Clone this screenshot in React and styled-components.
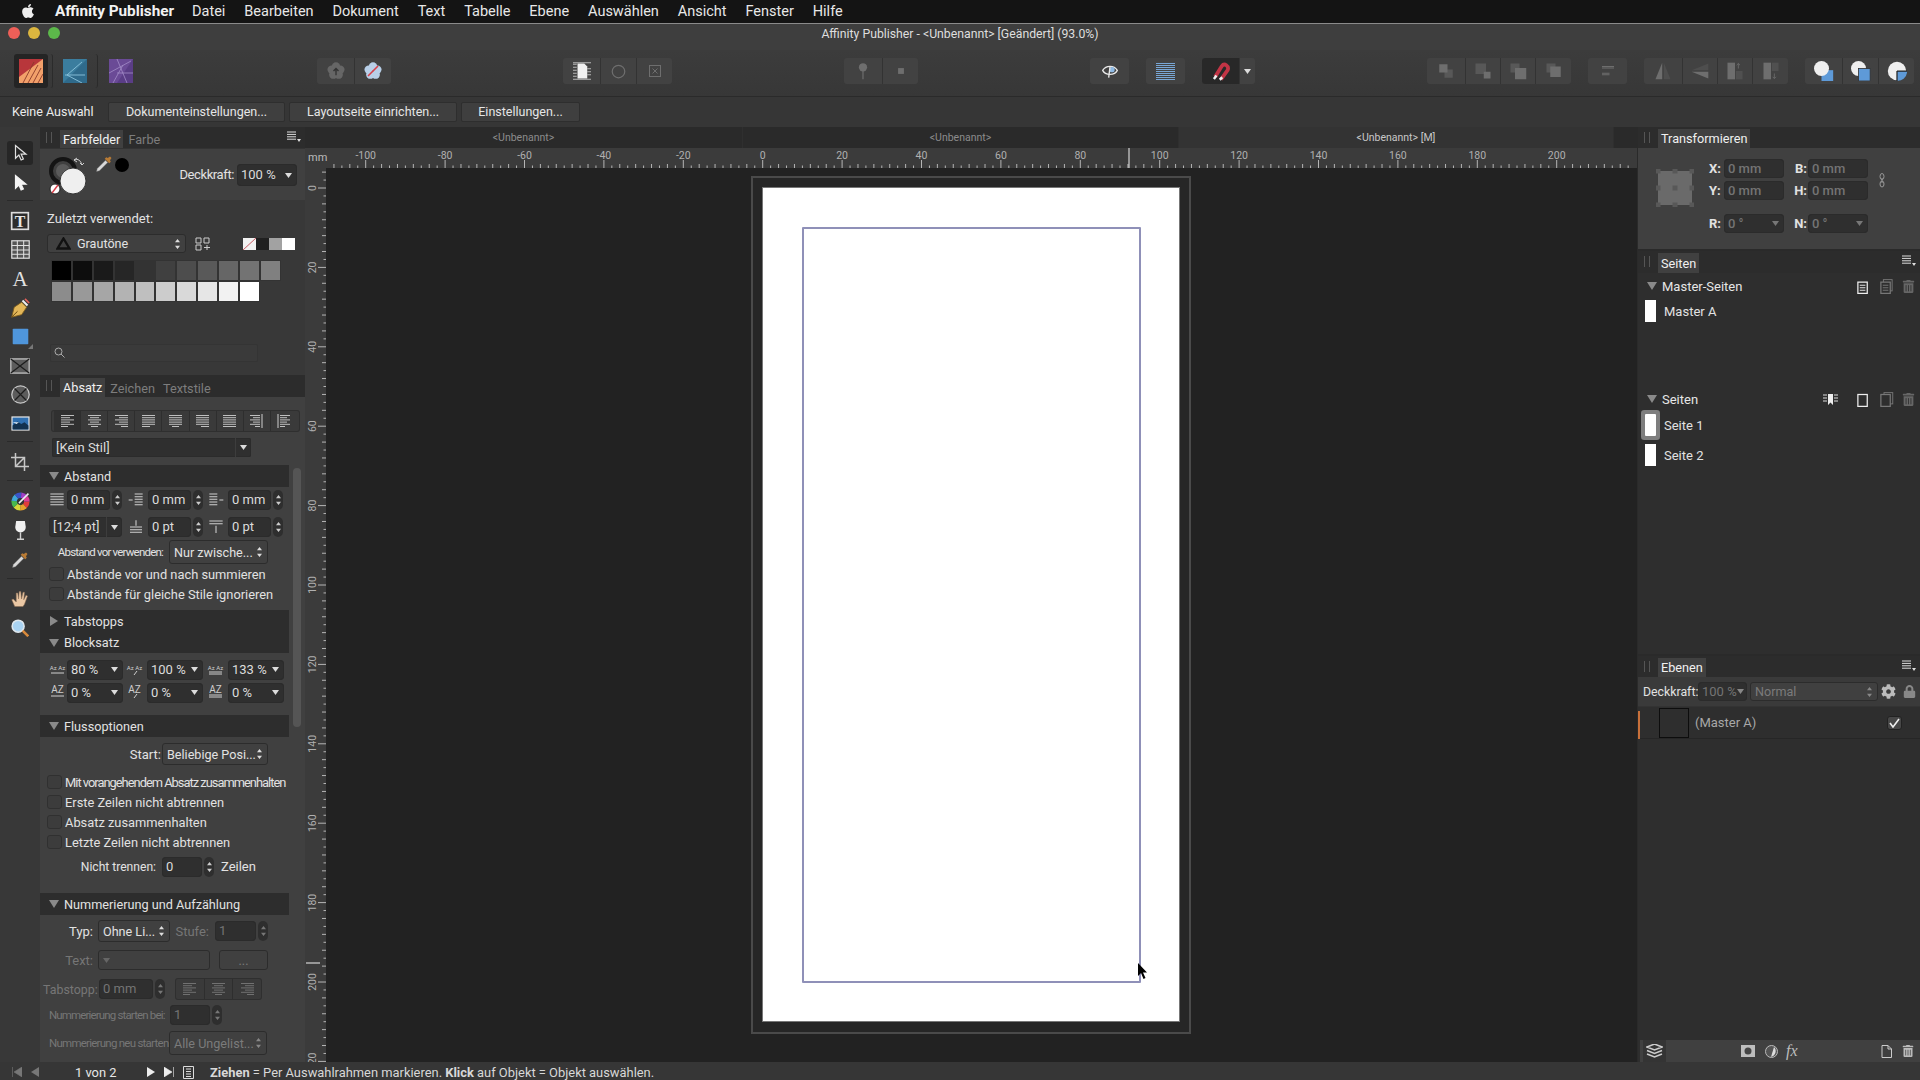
import React from "react";
import styled, { createGlobalStyle } from "styled-components";
import { FaApple, FaCog, FaLock, FaTrashAlt } from "react-icons/fa";

const Global = createGlobalStyle`
  html, body { margin: 0; background: #383838; overflow: hidden; }
  * { box-sizing: border-box; }
  #root { width: 1920px; height: 1080px; font-family: Roboto, "Liberation Sans", sans-serif; }
  svg { display: block; flex: none; }
`;

const Shell = styled.div`
  width: 1920px; height: 1080px; display: flex; flex-direction: column;
  background: #383838; color: #e2e2e2; font-size: 13px; overflow: hidden;
`;

/* top bars */
const MenuBar = styled.div`
  height: 24px; background: #141414; border-bottom: 1px solid #8a8a8a; display: flex; align-items: center;
  padding: 0 0 1px 20px; font-size: 14.5px; color: #e8e8e8; gap: 18.9px;
  b { font-weight: 700; font-size: 15.3px; color: #f2f2f2; margin-right: -1px; }
`;
const TitleBar = styled.div`
  height: 26px; position: relative; display: flex; align-items: center; justify-content: center;
  background: #3e3e3e; font-size: 12.25px; color: #dedede; padding-bottom: 6px;
`;
const Lights = styled.div`
  position: absolute; left: 8px; top: 3px; display: flex; gap: 8px;
`;
const Light = styled.span`
  width: 12px; height: 12px; border-radius: 50%; background: ${(p) => p.$c};
`;
const Toolbar = styled.div`
  height: 47px; display: flex; align-items: flex-start; padding: 8px 0 0 14px;
  background: linear-gradient(#3c3c3c, #373737); border-bottom: 1px solid #2a2a2a;
`;
const Persona = styled.div`
  width: ${(p) => p.$w}px; height: 34px; margin-top: -4px; display: flex; align-items: center; justify-content: center;
  background: ${(p) => (p.$on ? "#242424" : "transparent")}; border-radius: 3px;
  border-right: ${(p) => (p.$line ? "1px solid #2b2b2b" : "none")};
`;
const BtnGroup = styled.div`
  display: flex; height: 26px; margin-left: ${(p) => p.$ml || 0}px; background: #424242; border-radius: 3px; overflow: hidden;
`;
const ToolBtn = styled.div`
  width: ${(p) => p.$w || 36}px; display: flex; align-items: center; justify-content: center;
  background: ${(p) => (p.$dark ? "#282828" : "transparent")};
  & + & { border-left: 1px solid #333; }
`;
const ContextBar = styled.div`
  height: 30px; display: flex; align-items: flex-start; padding: 5px 0 0 12px; gap: 4px; background: #363636;
  span { width: 81px; margin-right: 11px; line-height: 20px; font-size: 12.5px; color: #ececec; white-space: nowrap; }
`;
const ContextBtn = styled.div`
  width: ${(p) => p.$w}px; height: 20px; background: #3f3f3f; border: 1px solid #2e2e2e; border-radius: 2px;
  text-align: center; line-height: 18px; font-size: 12.5px; color: #e6e6e6;
`;

/* main columns */
const Main = styled.div`
  flex: 1; display: flex; min-height: 0;
`;
const ToolColumn = styled.div`
  width: 40px; background: #383838; display: flex; flex-direction: column; align-items: center; padding-top: 14px;
`;
const Tool = styled.div`
  width: 26px; height: ${(p) => p.$h || 29}px; display: flex; align-items: center; justify-content: center; border-radius: 3px;
  background: ${(p) => (p.$on ? "#262626" : "transparent")};
  margin-bottom: ${(p) => p.$mb || 0}px;
  position: relative;
`;
const ToolRule = styled.div`
  width: 26px; height: 1px; background: #2a2a2a; margin: ${(p) => p.$m || "3px 0"};
`;

/* panels */
const LeftPanel = styled.div`
  width: 265px; background: #404040; display: flex; flex-direction: column;
`;
const PanelHead = styled.div`
  height: ${(p) => p.$h || 21}px; background: #2c2c2c; display: flex; align-items: flex-end; position: relative; padding-left: 20px;
  font-size: 12.7px; color: #777; flex: none;
  &::before {
    content: ""; position: absolute; left: 6px; top: 5px; width: 4px; height: 11px;
    border-left: 1px solid #555; border-right: 1px solid #555;
  }
`;
const Tab = styled.div`
  height: ${(p) => p.$h || 18}px; padding: 0 3px; margin-right: ${(p) => p.$mr || 2}px; display: flex; align-items: center;
  background: ${(p) => (p.$on ? "#404040" : "transparent")};
  color: ${(p) => (p.$on ? "#f0f0f0" : "#7d7d7d")};
`;
const HeadMenu = styled.div`
  position: absolute; right: 4px; top: 4px;
`;
const ColorHead = styled.div`
  height: 52px; display: flex; position: relative; background: #404040; padding: 15px 8px 0 0;
  justify-content: flex-end; align-items: flex-start; gap: 8px; border-top: 1px solid #333;
  em { font-style: normal; line-height: 22px; letter-spacing: -0.4px; margin-right: -5px; }
`;
const ColorChips = styled.div`
  position: absolute; left: 8px; top: 0;
`;
const SwatchArea = styled.div`
  height: 175px; background: #383838; padding: 11px 0 0 7px;
`;
const Faint = styled.div`
  line-height: 16px; color: #e2e2e2;
`;
const SwatchTools = styled.div`
  display: flex; align-items: center; margin-top: 7px; height: 19px;
`;
const Swatches = styled.div`
  display: grid; grid-template-columns: repeat(11, 20.9px); grid-auto-rows: 20.9px; margin: 7px 0 0 4px;
`;
const Swatch = styled.div`
  background: ${(p) => p.$c}; border: 1px solid #333;
`;
const MiniSwatch = styled.div`
  width: 13px; height: 12px; background: ${(p) => p.$c};
`;
const Search = styled.div`
  width: 208px; height: 18px; margin: 42px 0 0 3px; background: #3a3a3a; border: 1px solid #343434; border-radius: 2px;
  padding: 2px 0 0 3px;
`;
const AlignBar = styled.div`
  display: flex; width: ${(p) => p.$w}px; height: 20px; margin: ${(p) => p.$m || 0}; padding: 0 ${(p) => p.$inset || 0}px;
  background: #3a3a3a; border-radius: 2px; overflow: hidden;
  box-shadow: 0 0 0 1px #2f2f2f;
`;
const AlignBtn = styled.div`
  flex: 1; display: flex; align-items: center; justify-content: center;
  background: ${(p) => (p.$on ? "#303030" : "transparent")};
  & + & { border-left: 1px solid #2e2e2e; }
`;
const ScrollPart = styled.div`
  flex: 1; display: flex; min-height: 0; margin-top: 8px;
`;
const Sections = styled.div`
  width: 249px; display: flex; flex-direction: column;
`;
const ScrollStrip = styled.div`
  width: 16px; padding: 3px 0 0 4px;
  div { width: 8px; height: 259px; background: #555; border-radius: 4px; }
`;
const SectionHead = styled.div`
  height: ${(p) => p.$h || 22}px; background: #2d2d2d; display: flex; align-items: center; padding-left: 9px; gap: 5px;
  color: #e2e2e2; flex: none; font-size: 12.7px;
`;
const Triangle = styled.span`
  width: 0; height: 0; flex: none; margin-left: ${(p) => (p.$right ? "1px" : 0)};
  ${(p) =>
    p.$right
      ? "border-top: 5px solid transparent; border-bottom: 5px solid transparent; border-left: 8px solid #8a8a8a; margin-right: 1px;"
      : "border-left: 5px solid transparent; border-right: 5px solid transparent; border-top: 8px solid #8a8a8a;"}
`;
const SectionBody = styled.div`
  height: ${(p) => p.$h}px; padding-top: ${(p) => p.$pt || 0}px; flex: none;
`;
const Row = styled.div`
  display: flex; align-items: center; height: ${(p) => p.$h || 20}px; margin-top: ${(p) => p.$mt || 0}px;
  padding-left: ${(p) => p.$pl ?? 9}px; gap: ${(p) => p.$gap || 0}px;
`;
const Slot = styled.div`
  width: ${(p) => p.$w}px; display: flex; justify-content: ${(p) => (p.$end ? "flex-end" : "flex-start")}; padding-right: ${(p) => (p.$end ? 4 : 0)}px;
`;
const Grow = styled.span`
  flex: 1; margin-left: 6px;
`;
const Field = styled.div`
  width: ${(p) => p.$w}px; height: ${(p) => p.$h || 20}px; background: #2f2f2f; border-radius: ${(p) => p.$r ?? 4}px; padding-left: 4px;
  line-height: ${(p) => p.$h || 20}px; font-size: 13px; color: ${(p) => (p.$dim ? "#747474" : "#dcdcdc")};
  box-shadow: inset 0 0 0 1px #2b2b2b; display: flex; align-items: center; justify-content: space-between; padding-right: 5px; flex: none;
  margin-left: ${(p) => p.$ml || 0}px; white-space: nowrap;
`;
const DropCell = styled.div`
  width: 16px; height: 100%; border-left: 1px solid #3d3d3d; margin-right: -5px; display: flex; align-items: center; justify-content: center;
`;
const Stepper = styled.div`
  width: 10px; height: 20px; margin-left: 2px; background: #2e2e2e; border-radius: 5px; display: flex; align-items: center; justify-content: center; flex: none;
`;
const Selector = styled.div`
  width: ${(p) => p.$w}px; height: ${(p) => p.$h || 22}px; background: #404040; border: 1px solid #2c2c2c; border-radius: 3px;
  display: flex; align-items: center; justify-content: ${(p) => (p.$mid ? "center" : "space-between")}; padding: 0 4px; flex: none;
  font-size: 12.6px; color: ${(p) => (p.$dim ? "#7b7b7b" : "#e2e2e2")}; white-space: nowrap;
  margin-left: ${(p) => p.$ml || 0}px;
`;
const Label = styled.div`
  width: ${(p) => p.$w}px; text-align: right; margin: 0 ${(p) => p.$mr ?? 5}px 0 ${(p) => p.$ml || 0}px; white-space: nowrap; flex: none;
  font-size: ${(p) => p.$size || 13}px; letter-spacing: ${(p) => p.$sp || 0}px;
  color: ${(p) => (p.$dim ? "#767676" : "#e2e2e2")};
`;
const CheckRow = styled.div`
  display: flex; align-items: center; height: 20px; padding-left: ${(p) => p.$pl || 9}px; gap: 3px; margin-top: ${(p) => p.$mt || 0}px;
  white-space: nowrap; font-size: 12.85px; letter-spacing: ${(p) => p.$sp || 0}px;
`;
const CheckBox = styled.div`
  width: 15px; height: 14px; background: ${(p) => (p.$lit ? "#474747" : "#3c3c3c")}; border: 1px solid ${(p) => (p.$lit ? "#222" : "#303030")}; border-radius: 3px; flex: none;
  display: flex; align-items: center; justify-content: center;
`;

/* workspace */
const Workspace = styled.div`
  width: 1332px; display: flex; flex-direction: column; background: #222;
`;
const DocTabs = styled.div`
  height: 21px; display: flex; background: #2a2a2a; font-size: 10.5px; color: #8c8c8c; flex: none;
`;
const DocTab = styled.div`
  width: ${(p) => p.$w}px; display: flex; align-items: center; justify-content: center;
  background: ${(p) => (p.$on ? "#333" : "transparent")}; color: ${(p) => (p.$on ? "#c8c8c8" : "#8c8c8c")};
  border-right: 1px solid #2f2f2f;
`;
const RulerRow = styled.div`
  height: 20px; display: flex; background: #3b3b3b; flex: none;
`;
const RulerCorner = styled.div`
  width: 21px; font-size: 11px; color: #bbb; padding: 3px 0 0 3px;
`;
const Board = styled.div`
  flex: 1; display: flex; min-height: 0;
`;
const VRuler = styled.div`
  width: 21px; background: #3b3b3b; overflow: hidden;
`;
const Canvas = styled.div`
  width: 1310px; background: #222; padding: 8px 0 0 425px; overflow: hidden;
`;
const Bleed = styled.div`
  width: 440px; height: 858px; border: 2px solid #4a4a4a; background: #262626; padding: 9px;
`;
const Page = styled.div`
  width: 418px; height: 835px; background: #fff; padding: 40px 0 0 40px; position: relative; box-shadow: 0 0 0 1px #777 inset;
`;
const TextFrame = styled.div`
  width: 339px; height: 756px; border: 2px solid #8f90b8; border-radius: 1px;
`;
const Cursor = styled.svg`
  position: absolute; left: 375px; top: 776px;
`;

/* right side */
const RightPanel = styled.div`
  width: 283px; background: #2e2e2e; display: flex; flex-direction: column; border-left: 1px solid #2a2a2a;
`;
const TransformBody = styled.div`
  height: 101px; background: #404040; padding: 11px 0 0 18px; display: flex; gap: 15px; flex: none;
`;
const AnchorBox = styled.div`
  margin-top: 10px;
`;
const TransformGrid = styled.div`
  display: grid; grid-template-columns: 15px 60px 24px 60px 26px; grid-template-rows: 19px 19px 8px 19px; row-gap: 3px; align-items: center;
  font-weight: 500; font-size: 13px;
`;
const AxisRight = styled.b`
  text-align: right; padding-right: 1px;
`;
const LinkSlot = styled.div`
  padding-left: 11px; margin-top: ${(p) => p.$mt || 0}px;
`;
const Spacer = styled.div`
  grid-column: 1 / -1;
`;
const Divider = styled.div`
  height: 2px; background: #2a2a2a; flex: none;
`;
const PageHead = styled.div`
  display: flex; align-items: center; height: 20px; padding-left: 9px; gap: 5px; margin-top: ${(p) => p.$mt || 0}px; color: #e6e6e6; position: relative;
`;
const HeadIcons = styled.div`
  margin-left: auto; display: flex; align-items: center; padding-right: 5px; gap: 8px;
`;
const PageRow = styled.div`
  display: flex; align-items: center; height: ${(p) => p.$h || 24}px; padding-left: 7px; gap: 8px; margin-top: ${(p) => p.$mt || 0}px; color: #e2e2e2;
`;
const Thumb = styled.div`
  width: 11px; height: 22px; background: #fff;
  ${(p) => p.$sel && "box-shadow: 0 0 0 4px #7e7e7e; border-radius: 1px;"}
`;
const PagesBody = styled.div`
  height: 381px; padding-top: 3px; flex: none;
`;
const LayerTools = styled.div`
  height: 30px; display: flex; align-items: center; padding-left: 5px; background: #3a3a3a; border-bottom: 1px solid #333; flex: none;
`;
const LayerRow = styled.div`
  height: 32px; display: flex; align-items: center; border-bottom: 1px solid #262626; padding-right: 18px; flex: none;
`;
const LayerMark = styled.div`
  width: 2px; height: 28px; margin-top: 4px; background: #c8703a;
`;
const LayerThumb = styled.div`
  width: 30px; height: 30px; margin: 0 6px 0 19px; background: #2e2e2e; border: 1px solid #0d0d0d;
`;
const LayerName = styled.div`
  flex: 1; color: #a8a8a8;
`;
const LayerFill = styled.div`
  flex: 1; background: #2e2e2e;
`;
const BottomBar = styled.div`
  height: 22px; margin-left: 2px; background: #404040; display: flex; align-items: center; flex: none;
`;
const StackBtn = styled.div`
  width: 23px; height: 22px; background: #343434; margin-left: 3px; display: flex; align-items: center; justify-content: center;
`;
const Pad = styled.div`
  margin-left: ${(p) => p.$ml}px; display: flex; align-items: center; color: ${(p) => p.$c || "#bdbdbd"};
  font-family: "Liberation Serif", serif; font-style: italic; font-size: 16px;
`;
const StatusBar = styled.div`
  height: 18px; background: #363636; display: flex; align-items: center; padding: 2px 0 0 12px; font-size: 12.9px; flex: none;
  b { font-weight: 700; }
`;
const PageCount = styled.span`
  width: 72px; margin-left: 36px; color: #e6e6e6;
`;
const Hint = styled.span`
  margin-left: 16px; white-space: pre; color: #d8d8d8;
`;

/* icons */
const V = ({ s = 16, w, h, children, box = "0 0 24 24" }) => (
  <svg width={w || s} height={h || s} viewBox={box}>{children}</svg>
);
const UpDown = ({ c = "#ddd" }) => (
  <svg width="7" height="12" viewBox="0 0 7 12">
    <path d="M3.5 1L6 4.2H1zM3.5 11L1 7.8h5z" fill={c} />
  </svg>
);
const Down = ({ c = "#ddd" }) => (
  <svg width="7" height="5" viewBox="0 0 7 5">
    <path d="M0 0h7L3.5 5z" fill={c} />
  </svg>
);
const MenuLines = () => (
  <svg width="14" height="11" viewBox="0 0 14 11">
    <path d="M0 1h9M0 3.4h9M0 5.8h9M0 8.200h9" stroke="#ddd" />
    <path d="M10 8h4l-2 3z" fill="#ddd" />
  </svg>
);
const alignRows = {
  left: [[0, 13], [0, 9], [0, 13], [0, 9], [0, 13], [0, 7]],
  center: [[0, 13], [2, 11], [0, 13], [2, 11], [0, 13], [3, 10]],
  right: [[0, 13], [4, 13], [0, 13], [4, 13], [0, 13], [6, 13]],
  just: [[0, 13], [0, 13], [0, 13], [0, 13], [0, 13], [0, 8]],
  justC: [[0, 13], [0, 13], [0, 13], [0, 13], [0, 13], [3, 10]],
  justR: [[0, 13], [0, 13], [0, 13], [0, 13], [0, 13], [5, 13]],
  all: [[0, 13], [0, 13], [0, 13], [0, 13], [0, 13], [0, 13]],
  spine1: [[0, 10], [3, 10], [0, 10], [3, 10], [0, 10], [5, 10]],
  spine2: [[3, 13], [3, 10], [3, 13], [3, 10], [3, 13], [3, 8]],
};
const Lines = ({ rows, c = "#cfcfcf", spine }) => (
  <svg width="13" height="14" viewBox="0 0 13 14">
    {rows.map(([a, b], i) => (
      <path key={i} d={`M${a} ${1.5 + i * 2.2}H${b}`} stroke={c} strokeWidth="0.9" />
    ))}
    {spine && <path d={spine} stroke={c} />}
  </svg>
);
const PointerIcon = ({ fill = "#262626", stroke = "#e0e0e0" }) => (
  <V s={18}><path d="M6 2v17l4.500-4.200 3 6.600 3-1.400-3-6.400H20z" fill={fill} stroke={stroke} strokeWidth="1.6" /></V>
);
const TextFrameIcon = () => (
  <V s={20}>
    <rect x="2" y="2" width="20" height="20" fill="#2c2c2c" stroke="#dcdcdc" strokeWidth="2" />
    <text x="12" y="19" fontFamily="Liberation Serif" fontWeight="700" fontSize="19" fill="#e6e6e6" textAnchor="middle">T</text>
  </V>
);
const TableIcon = () => (
  <V s={19}>
    <rect x="1" y="1" width="22" height="22" fill="#555" stroke="#e0e0e0" strokeWidth="1.5" />
    <path d="M1 7h22M1 12.500h22M1 18h22M8 1v22M16 1v22" stroke="#e0e0e0" strokeWidth="1.3" />
  </V>
);
const ArtIcon = () => (
  <V s={22}><text x="12" y="20" fontFamily="Liberation Serif" fontSize="23" fill="#e2e2e2" textAnchor="middle">A</text></V>
);
const PenIcon = () => (
  <V s={20}>
    <path d="M2 23l3-12 9-6 6 6-6 9z" fill="#e2b658" stroke="#7a5a1c" />
    <path d="M2 23l7-7" stroke="#6a4a10" strokeWidth="1.2" />
    <path d="M15 3l6 6" stroke="#f0f0f0" strokeWidth="2.400" />
    <path d="M18 1l5 5" stroke="#e0605a" strokeWidth="2" />
  </V>
);
const ShapeIcon = () => (
  <V s={17}><rect x="1" y="1" width="22" height="22" rx="1" fill="#4f96dc" /></V>
);
const CornerMark = styled.span`
  position: absolute; right: 0; bottom: 2px; width: 0; height: 0;
  border-bottom: 5px solid #777; border-left: 5px solid transparent;
`;
const RectXIcon = () => (
  <V w={20} h={16} box="0 0 24 19">
    <rect x="1" y="1" width="22" height="17" fill="#5c5c5c" stroke="#c8c8c8" strokeWidth="1.5" />
    <path d="M1 1l22 17M23 1L1 18" stroke="#1d1d1d" strokeWidth="1.5" />
  </V>
);
const CircleXIcon = () => (
  <V s={19}>
    <circle cx="12" cy="12" r="11" fill="#5c5c5c" stroke="#c8c8c8" strokeWidth="1.6" />
    <path d="M4.500 4.500l15 15M19.500 4.500l-15 15" stroke="#1d1d1d" strokeWidth="1.6" />
  </V>
);
const ImageIcon = () => (
  <V w={19} h={15} box="0 0 24 19">
    <rect x="0.5" y="0.5" width="23" height="18" fill="#eaeaea" />
    <rect x="2" y="2" width="20" height="15" fill="#2f6fb0" />
    <path d="M2 12l6-5 5 3 4-2 5 4v5H2z" fill="#12314f" />
    <path d="M2 8h8l-3 2z" fill="#dfefff" />
  </V>
);
const CropIcon = () => (
  <V s={18}><path d="M6 0v18h18M0 6h18v18M6 18L18 6" fill="none" stroke="#c8c8c8" strokeWidth="2" /></V>
);
const wheel = ["#e23b3b", "#e8a02c", "#d8d83a", "#49b84e", "#3fa7d8", "#3a53c8", "#a13fc4", "#dd3d98"];
const WheelIcon = () => (
  <V s={19}>
    {wheel.map((c, i) => (
      <circle key={c} cx="12" cy="12" r="8" fill="none" stroke={c} strokeWidth="7" strokeDasharray="6.300 44" strokeDashoffset={-6.28 * i} />
    ))}
    <circle cx="12" cy="12" r="4" fill="#333" />
    <path d="M10 14L22 2" stroke="#eee" strokeWidth="2" />
  </V>
);
const GlassIcon = () => (
  <V s={21}>
    <path d="M7 1h10l1 7c0 4-3 6-6 6s-6-2-6-6z" fill="#f0f0f0" />
    <path d="M12 14v7M8 22h8" stroke="#d0d0d0" strokeWidth="1.6" />
  </V>
);
const DropperIcon = ({ s = 18 }) => (
  <V s={s}>
    <path d="M2 22l1-4L14 7l3 3L6 21z" fill="#d8d8d8" stroke="#666" strokeWidth="0.6" />
    <path d="M13 5l6 6 2-2-1-2 2-3-2-2-3 2-2-1z" fill="#b87b35" />
  </V>
);
const HandIcon = () => (
  <V s={18}>
    <path d="M5 22L1 13l2-1 4 4 0-12h2l1 8 1-10h2l1 10 2-9h2l-1 10 3-6 2 1-4 11-2 3z" fill="#eac7a4" stroke="#8a6c52" strokeWidth="0.7" />
  </V>
);
const ZoomIcon = () => (
  <V s={18}>
    <circle cx="9.500" cy="9.500" r="8" fill="#a9d3f2" stroke="#dfe8ee" strokeWidth="2" />
    <path d="M15.500 15.500L23 23" stroke="#d88a3c" strokeWidth="3.400" />
  </V>
);
const PublisherLogo = () => (
  <V s={24}>
    <rect width="24" height="24" fill="#f2a06a" />
    <path d="M0 0h24L0 18z" fill="#b8363b" />
    <path d="M4 24L15 3M9 24L19 6M14 24L22 9M19 24l5-9" stroke="#8a3a2a" strokeWidth="0.9" />
  </V>
);
const DesignerLogo = () => (
  <V s={24}>
    <rect width="24" height="24" fill="#3b7d9e" />
    <path d="M0 24h24V0z" fill="#2f6a8b" />
    <path d="M2 16h20M19 3L4 16l15 8" stroke="#8cc4dc" fill="none" strokeWidth="0.9" />
  </V>
);
const PhotoLogo = () => (
  <V s={24}>
    <rect width="24" height="24" fill="#6a4a96" />
    <path d="M24 0v24H8z" fill="#5a3d86" />
    <path d="M8 0l10 24M0 14L22 2M4 24L14 6M24 14H8" stroke="#a38dc8" strokeWidth="0.8" />
  </V>
);
const Flower = ({ fill, slash, up }) => (
  <V s={20}>
    {[0, 72, 144, 216, 288].map((a) => (
      <circle key={a} cx={12 + 5.5 * Math.sin((a * Math.PI) / 180)} cy={12 - 5.5 * Math.cos((a * Math.PI) / 180)} r="5" fill={fill} />
    ))}
    {slash && <path d="M6 18L18 6" stroke="#d8404a" strokeWidth="2" />}
    {up && <path d="M12 17V9M9 12l3-3 3 3" stroke="#333" strokeWidth="1.6" fill="none" />}
  </V>
);
const DocLines = () => (
  <V s={18}>
    <path d="M6 2h9l4 4v16H6z" fill="#f0f0f0" />
    <path d="M0 3h5M0 7h5M0 11h5M0 15h5M0 19h5M0 23h24M19 9h5M19 13h5M19 17h5" stroke="#ddd" />
    <path d="M0 1h24" stroke="#ddd" />
  </V>
);
const Dim = "#6e6e6e";
const DimCircle = () => <V s={15}><circle cx="12" cy="12" r="10" fill="none" stroke={Dim} strokeWidth="2" /></V>;
const DimXBox = () => (
  <V s={12}>
    <rect x="1" y="1" width="22" height="22" fill="none" stroke={Dim} strokeWidth="2" />
    <path d="M7 7l10 10M17 7L7 17" stroke={Dim} strokeWidth="2" />
  </V>
);
const Pin = () => (
  <V s={18}><circle cx="12" cy="7" r="5.500" fill={Dim} /><path d="M12 12v11" stroke={Dim} strokeWidth="1.6" /></V>
);
const SmallSquare = () => <V s={14}><rect x="7" y="7" width="10" height="10" fill={Dim} /></V>;
const EyeIcon = () => (
  <V s={16}>
    <path d="M1 11c5-8 17-8 22 0-2 4-6 6-11 6S3 15 1 11z" fill="none" stroke="#e8e8e8" strokeWidth="2" />
    <circle cx="15" cy="10" r="4" fill="#8ebbe6" />
    <path d="M12 6l-2 16" stroke="#e8e8e8" strokeWidth="2" />
  </V>
);
const GridLines = () => (
  <svg width="19" height="19" viewBox="0 0 19 19">
    {Array.from({ length: 9 }, (_, i) => <path key={i} d={`M0 ${1.5 + i * 2}h19`} stroke="#79a7d6" />)}
  </svg>
);
const MagnetIcon = () => (
  <V s={20}>
    <path d="M5 19L13 6c3-4 9 0 7 5L12 22" fill="none" stroke="#c23445" strokeWidth="4.500" />
    <path d="M3.500 21.500l3-4M10.500 22.500l3-3" stroke="#eee" strokeWidth="3" />
  </V>
);
const Two = ({ a, b, c = Dim, d = "#585858" }) => (
  <V s={18}>
    <rect {...a} fill={d} />
    <rect {...b} fill={c} />
  </V>
);
const TriFlip = ({ rot }) => (
  <V s={20}>
    <g transform={rot ? "rotate(-90 12 12)" : ""}>
      <path d="M11 2v20H3z" fill={Dim} />
      <path d="M13 2v20h8z" fill="#4e4e4e" />
    </g>
  </V>
);
const Rotate = ({ flip }) => (
  <V s={20}>
    <g transform={flip ? "matrix(1 0 0 -1 0 24)" : ""}>
      <rect x="3" y="2" width="9" height="20" fill={Dim} />
      <rect x="13" y="12" width="8" height="10" fill="#505050" />
      <path d="M16 9V3M14 5l2-2 2 2" stroke={Dim} fill="none" />
    </g>
  </V>
);
const BoolIcon = ({ kind }) => (
  <V s={20}>
    {kind === 0 && <><rect x="9" y="11" width="14" height="13" fill="#5e9ad8" /><circle cx="9" cy="9" r="9" fill="#efefef" /></>}
    {kind === 1 && <><circle cx="9" cy="9" r="9" fill="#efefef" /><rect x="9" y="9" width="14" height="15" fill="#5e9ad8" stroke="#333" /></>}
    {kind === 2 && <><circle cx="12" cy="12" r="11" fill="#efefef" /><path d="M12 12h12v2a11 11 0 0 1-12 9.500z" fill="#5e9ad8" /><path d="M12 12h12M12 12v12" stroke="#222" strokeWidth="1.5" /></>}
  </V>
);
const LineIcon = ({ d, c = "#cfcfcf", s = 16 }) => (
  <V s={s}><path d={d} fill="none" stroke={c} strokeWidth="1.6" /></V>
);
const Gap = { a: "M2 3h20M2 7h20M2 11h20M2 15h20M2 19h20", b: "M1 12h6M10 3h12M10 7h12M10 11h12M10 15h12M10 19h12", c: "M2 3h12M2 7h12M2 11h12M2 15h12M2 19h12M17 12h6", d: "M12 2v8M3 12h18M3 16h18M3 20h18", e: "M2 3h20M2 7h20M12 10v11" };
const AzIcon = ({ mark = "-", two }) => (
  <svg width="17" height="15" viewBox="0 0 17 15">
    <text x="8.500" y="7.500" fontFamily="Roboto" fontSize={two ? 6 : 10} fill="#cfcfcf" textAnchor="middle">{two ? "Az Az" : "AZ"}</text>
    {mark === "-" && <path d="M2 11h13" stroke="#cfcfcf" />}
    {mark === "v" && <path d="M8 13l3-4" stroke="#cfcfcf" />}
    {mark === "=" && <path d="M2 10h13M2 12h13" stroke="#cfcfcf" />}
  </svg>
);
const MiniDoc = ({ c = "#eee", stack }) => (
  <V s={15}>
    {stack && <rect x="7" y="1" width="14" height="18" fill="none" stroke={c} strokeWidth="1.5" />}
    <rect x="3" y="5" width="15" height="18" fill="#2e2e2e" stroke={c} strokeWidth="2" />
    <path d="M6 10h9M6 14h9M6 18h9" stroke={c} strokeWidth="1.5" />
  </V>
);
const PlainPage = ({ c = "#eee", stack }) => (
  <V s={15}>
    {stack && <rect x="8" y="1" width="14" height="18" fill="none" stroke={c} strokeWidth="1.5" />}
    <rect x="3" y="4" width="15" height="19" fill="#2e2e2e" stroke={c} strokeWidth="2" />
  </V>
);
const Check = () => (
  <svg width="11" height="10" viewBox="0 0 11 10"><path d="M1 5l3 4 6-8" fill="none" stroke="#eee" strokeWidth="1.6" /></svg>
);
const AnchorIcon = () => {
  const pts = [2, 19, 36];
  return (
    <svg width="38" height="38" viewBox="0 0 38 38">
      <rect x="2" y="2" width="34" height="34" fill="#6a6a6a" />
      {pts.map((x) => pts.map((y) => <rect key={`${x}${y}`} x={x - 2.5} y={y - 2.5} width="5" height="5" fill="#585858" />))}
    </svg>
  );
};

/* rulers */
const TopRuler = () => {
  const zero = 436.7, unit = 3.97;
  const ticks = [];
  for (let u = -108; u <= 218; u += 2) {
    const x = zero + u * unit;
    const major = u % 20 === 0;
    ticks.push(<path key={u} d={`M${x} ${major ? 12 : u % 4 === 0 ? 16 : 17.5}V20`} stroke="#d4d4d4" strokeWidth="0.8" />);
  }
  return (
    <svg width="1310" height="20">
      {ticks}
      {Array.from({ length: 16 }, (_, i) => -100 + i * 20).map((n) => (
        <text key={n} x={zero + n * unit} y="11" fontSize="10.5" fontFamily="Roboto" fill="#b0b0b0" textAnchor="middle">{n}</text>
      ))}
      <path d="M803 0v20" stroke="#f2f2f2" />
    </svg>
  );
};
const SideRuler = () => {
  const zero = 20, unit = 3.97;
  const ticks = [];
  for (let u = -4; u <= 222; u += 2) {
    const y = zero + u * unit;
    const major = u % 20 === 0;
    ticks.push(<path key={u} d={`M${major ? 13 : u % 4 === 0 ? 17 : 18.5} ${y}H21`} stroke="#d4d4d4" strokeWidth="0.8" />);
  }
  return (
    <svg width="21" height="894">
      {ticks}
      {Array.from({ length: 12 }, (_, i) => i * 20).map((n) => (
        <text key={n} transform={`translate(11 ${zero + n * unit}) rotate(-90)`} fontSize="10.5" fontFamily="Roboto" fill="#b0b0b0" textAnchor="middle">{n}</text>
      ))}
      <path d="M1 795h14" stroke="#f2f2f2" />
    </svg>
  );
};

const Spin = ({ w = 43, children, dim, ml }) => (
  <>
    <Field $w={w} $dim={dim} $ml={ml}>{children}</Field>
    <Stepper><UpDown c={dim ? "#777" : "#ccc"} /></Stepper>
  </>
);
const Combo = ({ w = 56, children, dim }) => (
  <Field $w={w} $dim={dim}>{children}<Down c={dim ? "#777" : "#ddd"} /></Field>
);

const grays1 = ["#000", "#0d0d0d", "#1a1a1a", "#262626", "#333", "#404040", "#4d4d4d", "#595959", "#666", "#737373", "#808080"];
const grays2 = ["#8c8c8c", "#999", "#a6a6a6", "#b3b3b3", "#bfbfbf", "#ccc", "#d9d9d9", "#e6e6e6", "#f2f2f2", "#fff"];
const menus = ["Datei", "Bearbeiten", "Dokument", "Text", "Tabelle", "Ebene", "Auswählen", "Ansicht", "Fenster", "Hilfe"];
const aligns = ["left", "center", "right", "just", "justC", "justR", "all"];

export default function App() {
  return (
    <Shell>
      <Global />
      <MenuBar>
        <FaApple size={16} color="#eee" />
        <b>Affinity Publisher</b>
        {menus.map((m) => <span key={m}>{m}</span>)}
      </MenuBar>
      <TitleBar>
        <Lights>
          <Light $c="#ee5f58" /><Light $c="#dcb63f" /><Light $c="#5cb84a" />
        </Lights>
        Affinity Publisher - &lt;Unbenannt&gt; [Geändert] (93.0%)
      </TitleBar>
      <Toolbar>
        <Persona $w={34} $on><PublisherLogo /></Persona>
        <Persona $w={5} $line />
        <Persona $w={45} $line><DesignerLogo /></Persona>
        <Persona $w={46}><PhotoLogo /></Persona>
        <BtnGroup $ml={173}>
          <ToolBtn $w={37}><Flower fill="#666" up /></ToolBtn>
          <ToolBtn $w={37}><Flower fill="#b8cfe8" slash /></ToolBtn>
        </BtnGroup>
        <BtnGroup $ml={172}>
          <ToolBtn $w={37}><DocLines /></ToolBtn>
          <ToolBtn $w={36}><DimCircle /></ToolBtn>
          <ToolBtn $w={36}><DimXBox /></ToolBtn>
        </BtnGroup>
        <BtnGroup $ml={172}>
          <ToolBtn $w={38}><Pin /></ToolBtn>
          <ToolBtn $w={36}><SmallSquare /></ToolBtn>
        </BtnGroup>
        <BtnGroup $ml={172}><ToolBtn $w={39}><EyeIcon /></ToolBtn></BtnGroup>
        <BtnGroup $ml={17}><ToolBtn $w={39}><GridLines /></ToolBtn></BtnGroup>
        <BtnGroup $ml={17}>
          <ToolBtn $w={37} $dark><MagnetIcon /></ToolBtn>
          <ToolBtn $w={16}><Down c="#ddd" /></ToolBtn>
        </BtnGroup>
        <BtnGroup $ml={172}>
          <ToolBtn $w={38}><Two a={{ x: 10, y: 10, width: 11, height: 11 }} b={{ x: 3, y: 3, width: 11, height: 11 }} /></ToolBtn>
          <ToolBtn $w={35}><Two a={{ x: 2, y: 2, width: 14, height: 14 }} b={{ x: 13, y: 13, width: 9, height: 9 }} /></ToolBtn>
          <ToolBtn $w={35}><Two a={{ x: 2, y: 2, width: 12, height: 12 }} b={{ x: 8, y: 8, width: 15, height: 15 }} /></ToolBtn>
          <ToolBtn $w={36}><Two a={{ x: 2, y: 2, width: 12, height: 12 }} b={{ x: 7, y: 6, width: 14, height: 14 }} /></ToolBtn>
        </BtnGroup>
        <BtnGroup $ml={17}>
          <ToolBtn $w={39}><LineIcon c={Dim} s={18} d="M4 6h16M4 8h16M4 15h10M4 17h10" /></ToolBtn>
        </BtnGroup>
        <BtnGroup $ml={17}>
          <ToolBtn $w={38}><TriFlip /></ToolBtn>
          <ToolBtn $w={35}><TriFlip rot /></ToolBtn>
          <ToolBtn $w={35}><Rotate /></ToolBtn>
          <ToolBtn $w={36}><Rotate flip /></ToolBtn>
        </BtnGroup>
        <BtnGroup $ml={17}>
          <ToolBtn $w={37}><BoolIcon kind={0} /></ToolBtn>
          <ToolBtn $w={36}><BoolIcon kind={1} /></ToolBtn>
          <ToolBtn $w={36}><BoolIcon kind={2} /></ToolBtn>
        </BtnGroup>
      </Toolbar>
      <ContextBar>
        <span>Keine Auswahl</span>
        <ContextBtn $w={177}>Dokumenteinstellungen...</ContextBtn>
        <ContextBtn $w={168}>Layoutseite einrichten...</ContextBtn>
        <ContextBtn $w={119}>Einstellungen...</ContextBtn>
      </ContextBar>

      <Main>
        <ToolColumn>
          <Tool $on $h={24} $mb={3}><PointerIcon /></Tool>
          <Tool $h={30}><PointerIcon fill="#f4f4f4" stroke="#f4f4f4" /></Tool>
          <ToolRule $m="2px 0 5px" />
          <Tool><TextFrameIcon /></Tool>
          <Tool><TableIcon /></Tool>
          <Tool><ArtIcon /></Tool>
          <Tool><PenIcon /></Tool>
          <Tool><ShapeIcon /><CornerMark /></Tool>
          <Tool><RectXIcon /></Tool>
          <Tool><CircleXIcon /></Tool>
          <Tool><ImageIcon /></Tool>
          <ToolRule $m="3px 0 5px" />
          <Tool><CropIcon /></Tool>
          <ToolRule $m="4px 0 6px" />
          <Tool><WheelIcon /></Tool>
          <Tool><GlassIcon /></Tool>
          <Tool><DropperIcon /></Tool>
          <ToolRule $m="4px 0 5px" />
          <Tool><HandIcon /></Tool>
          <Tool><ZoomIcon /></Tool>
        </ToolColumn>

        <LeftPanel>
          <PanelHead>
            <Tab $on>Farbfelder</Tab>
            <Tab>Farbe</Tab>
            <HeadMenu><MenuLines /></HeadMenu>
          </PanelHead>
          <ColorHead>
            <ColorChips>
              <svg width="100" height="50" viewBox="0 0 100 50">
                <circle cx="15" cy="22" r="12" fill="none" stroke="#141414" strokeWidth="4" />
                <circle cx="15" cy="22" r="7" fill="#5a5a5a" />
                <circle cx="25" cy="32" r="13" fill="#efefef" stroke="#333" />
                <circle cx="7" cy="40" r="5" fill="#fff" stroke="#222" />
                <path d="M4 44l6-8" stroke="#d8404a" strokeWidth="1.4" />
                <path d="M26 11c4-2 7 1 8 5M26 11l3-2M26 11l3 2M34 16l-2-2M34 16l2-2" fill="none" stroke="#cfcfcf" />
                <circle cx="74" cy="16" r="7" fill="#000" />
                <g transform="translate(47 6)"><DropperIcon s={18} /></g>
              </svg>
            </ColorChips>
            <em>Deckkraft:</em>
            <Field $w={60} $h={22}>100 %<Down /></Field>
          </ColorHead>
          <SwatchArea>
            <Faint>Zuletzt verwendet:</Faint>
            <SwatchTools>
              <Selector $w={139} $h={19}>
                <svg width="15" height="13" viewBox="0 0 15 13" style={{ marginLeft: 4 }}><path d="M7.500 1.500L13.500 11.500h-12z" fill="none" stroke="#111" strokeWidth="2.400" /></svg>
                <Grow>Grautöne</Grow>
                <UpDown />
              </Selector>
              <Slot $w={28} $end>
                <svg width="15" height="14" viewBox="0 0 15 14"><path d="M1 1h5v5H1zM9 1h5v5H9zM1 8h5v5H1z" fill="none" stroke="#ccc" /><path d="M9 10.500h6M12 8v5" stroke="#ccc" /></svg>
              </Slot>
              <svg width="13" height="12" viewBox="0 0 13 12" style={{ marginLeft: 29 }}>
                <rect width="13" height="12" fill="#f2f2f2" /><path d="M0 12L13 0" stroke="#c85a64" />
              </svg>
              <MiniSwatch $c="#202020" /><MiniSwatch $c="#a2a2a2" /><MiniSwatch $c="#fff" />
            </SwatchTools>
            <Swatches>
              {grays1.map((c, i) => <Swatch key={i} $c={c} />)}
              {grays2.map((c, i) => <Swatch key={i} $c={c} />)}
            </Swatches>
            <Search>
              <svg width="11" height="11" viewBox="0 0 11 11"><circle cx="4.500" cy="4.500" r="3.500" fill="none" stroke="#aaa" /><path d="M7 7l3.500 3.500" stroke="#aaa" /></svg>
            </Search>
          </SwatchArea>
          <PanelHead $h={22}>
            <Tab $on $h={19}>Absatz</Tab>
            <Tab>Zeichen</Tab>
            <Tab>Textstile</Tab>
          </PanelHead>
          <AlignBar $w={247} $inset={2} $m="14px 0 0 12px">
            {aligns.map((a, i) => <AlignBtn key={a} $on={i === 0}><Lines rows={alignRows[a]} /></AlignBtn>)}
            <AlignBtn><Lines rows={alignRows.spine1} spine="M12 0v14" /></AlignBtn>
            <AlignBtn><Lines rows={alignRows.spine2} spine="M1 0v14" /></AlignBtn>
          </AlignBar>
          <Row $pl={12} $mt={7} $h={19}>
            <Field $w={199} $h={19} $r={2}>
              [Kein Stil]
              <DropCell><Down /></DropCell>
            </Field>
          </Row>
          <ScrollPart>
            <Sections>
              <SectionHead><Triangle />Abstand</SectionHead>
              <SectionBody $h={123} $pt={3}>
                <Row>
                  <Slot $w={18}><LineIcon d={Gap.a} /></Slot><Spin>0 mm</Spin>
                  <Slot $w={26} $end><LineIcon d={Gap.b} /></Slot><Spin>0 mm</Spin>
                  <Slot $w={25} $end><LineIcon d={Gap.c} /></Slot><Spin>0 mm</Spin>
                </Row>
                <Row $mt={7}>
                  <Field $w={73}>[12;4 pt]<DropCell><Down /></DropCell></Field>
                  <Slot $w={26} $end><LineIcon d={Gap.d} /></Slot><Spin>0 pt</Spin>
                  <Slot $w={25} $end><LineIcon d={Gap.e} /></Slot><Spin>0 pt</Spin>
                </Row>
                <Row $mt={3} $h={24}>
                  <Label $w={114} $mr={6} $size={11.5} $sp={-0.8}>Abstand vor verwenden:</Label>
                  <Selector $w={99} $h={24}>Nur zwische...<UpDown /></Selector>
                </Row>
                <CheckRow><CheckBox />Abstände vor und nach summieren</CheckRow>
                <CheckRow><CheckBox />Abstände für gleiche Stile ignorieren</CheckRow>
              </SectionBody>
              <SectionHead><Triangle $right />Tabstopps</SectionHead>
              <SectionHead $h={21}><Triangle />Blocksatz</SectionHead>
              <SectionBody $h={62} $pt={7}>
                <Row $h={19}>
                  <Slot $w={18}><AzIcon two mark="-" /></Slot><Combo>80 %</Combo>
                  <Slot $w={24} $end><AzIcon two mark="v" /></Slot><Combo>100 %</Combo>
                  <Slot $w={25} $end><AzIcon two mark="=" /></Slot><Combo>133 %</Combo>
                </Row>
                <Row $h={19} $mt={4}>
                  <Slot $w={18}><AzIcon mark="-" /></Slot><Combo>0 %</Combo>
                  <Slot $w={24} $end><AzIcon mark="v" /></Slot><Combo>0 %</Combo>
                  <Slot $w={25} $end><AzIcon mark="=" /></Slot><Combo>0 %</Combo>
                </Row>
              </SectionBody>
              <SectionHead><Triangle />Flussoptionen</SectionHead>
              <SectionBody $h={156} $pt={6}>
                <Row $h={22}>
                  <Label $w={112} $mr={1}>Start:</Label>
                  <Selector $w={106}>Beliebige Posi...<UpDown /></Selector>
                </Row>
                <CheckRow $pl={7} $mt={7} $sp={-0.98}><CheckBox />Mit vorangehendem Absatz zusammenhalten</CheckRow>
                <CheckRow $pl={7}><CheckBox />Erste Zeilen nicht abtrennen</CheckRow>
                <CheckRow $pl={7}><CheckBox />Absatz zusammenhalten</CheckRow>
                <CheckRow $pl={7}><CheckBox />Letzte Zeilen nicht abtrennen</CheckRow>
                <Row $mt={5} $h={19}>
                  <Label $w={107} $mr={6} $size={12.1}>Nicht trennen:</Label>
                  <Spin w={40}>0</Spin>
                  <Label $w={31} $ml={7}>Zeilen</Label>
                </Row>
              </SectionBody>
              <SectionHead>
                <Triangle />Nummerierung und Aufzählung
              </SectionHead>
              <SectionBody $h={147} $pt={5}>
                <Row $h={22}>
                  <Label $w={44}>Typ:</Label>
                  <Selector $w={72}>Ohne Li...<UpDown /></Selector>
                  <Label $w={39} $mr={6} $dim>Stufe:</Label>
                  <Spin w={41} dim>1</Spin>
                </Row>
                <Row $h={20} $mt={8}>
                  <Label $w={44} $dim>Text:</Label>
                  <Selector $w={112} $h={20} $dim><Down c="#666" /></Selector>
                  <Selector $w={49} $h={20} $ml={9} $dim $mid>...</Selector>
                </Row>
                <Row $h={20} $mt={9} $pl={3}>
                  <Label $w={52} $mr={4} $dim $size={12.4}>Tabstopp:</Label>
                  <Spin w={54} dim>0 mm</Spin>
                  <AlignBar $w={85} $m="0 0 0 11px">
                    <AlignBtn><Lines rows={alignRows.left} c="#777" /></AlignBtn>
                    <AlignBtn><Lines rows={alignRows.center} c="#777" /></AlignBtn>
                    <AlignBtn><Lines rows={alignRows.right} c="#777" /></AlignBtn>
                  </AlignBar>
                </Row>
                <Row $h={20} $mt={6}>
                  <Label $w={115} $mr={6} $size={11.5} $sp={-0.85} $dim>Nummerierung starten bei:</Label>
                  <Spin w={40} dim>1</Spin>
                </Row>
                <Row $h={24} $mt={6}>
                  <Label $w={115} $mr={5} $size={11.5} $sp={-0.75} $dim>Nummerierung neu starten:</Label>
                  <Selector $w={98} $h={24} $dim>Alle Ungelist...<UpDown c="#888" /></Selector>
                </Row>
              </SectionBody>
            </Sections>
            <ScrollStrip><div /></ScrollStrip>
          </ScrollPart>
        </LeftPanel>

        <Workspace>
          <DocTabs>
            <DocTab $w={438}>&lt;Unbenannt&gt;</DocTab>
            <DocTab $w={436}>&lt;Unbenannt&gt;</DocTab>
            <DocTab $w={435} $on>&lt;Unbenannt&gt; [M]</DocTab>
          </DocTabs>
          <RulerRow>
            <RulerCorner>mm</RulerCorner>
            <TopRuler />
          </RulerRow>
          <Board>
            <VRuler><SideRuler /></VRuler>
            <Canvas>
              <Bleed>
                <Page>
                  <TextFrame />
                  <Cursor width="10" height="17" viewBox="0 0 10 17">
                    <path d="M1 0v13l3-3 2.500 6 2-1-2.500-5.500H10z" fill="#000" />
                  </Cursor>
                </Page>
              </Bleed>
            </Canvas>
          </Board>
        </Workspace>

        <RightPanel>
          <PanelHead>
            <Tab $on $h={19}>Transformieren</Tab>
          </PanelHead>
          <TransformBody>
            <AnchorBox><AnchorIcon /></AnchorBox>
            <TransformGrid>
              <b>X:</b><Field $w={60} $h={19} $dim>0 mm</Field><AxisRight>B:</AxisRight><Field $w={60} $h={19} $dim>0 mm</Field>
              <span />
              <b>Y:</b><Field $w={60} $h={19} $dim>0 mm</Field><AxisRight>H:</AxisRight><Field $w={60} $h={19} $dim>0 mm</Field>
              <LinkSlot $mt={-21}>
                <svg width="6" height="15" viewBox="0 0 6 15"><ellipse cx="3" cy="3.500" rx="2" ry="3" fill="none" stroke="#999" /><ellipse cx="3" cy="11" rx="2" ry="3" fill="none" stroke="#999" /><path d="M3 5v5" stroke="#999" /></svg>
              </LinkSlot>
              <Spacer />
              <b>R:</b><Field $w={60} $h={19} $dim>0 °<Down c="#777" /></Field><AxisRight>N:</AxisRight><Field $w={60} $h={19} $dim>0 °<Down c="#777" /></Field>
            </TransformGrid>
          </TransformBody>
          <Divider />
          <PanelHead $h={22}>
            <Tab $on $h={20}>Seiten</Tab>
            <HeadMenu><MenuLines /></HeadMenu>
          </PanelHead>
          <PagesBody>
            <PageHead>
              <Triangle />Master-Seiten
              <HeadIcons>
                <MiniDoc />
                <MiniDoc c="#777" stack />
                <FaTrashAlt size={13} color="#666" />
              </HeadIcons>
            </PageHead>
            <PageRow $mt={4} $h={22}><Thumb />Master A</PageRow>
            <PageHead $mt={67}>
              <Triangle />Seiten
              <HeadIcons>
                <svg width="15" height="11" viewBox="0 0 15 11" style={{ marginRight: 10 }}>
                  <path d="M0 1h4M0 4h4M0 7h4M11 1h4M11 4h4M11 7h4" stroke="#ddd" /><path d="M5 0h5v11L7.500 8.500 5 11z" fill="#eee" />
                </svg>
                <PlainPage />
                <PlainPage c="#777" stack />
                <FaTrashAlt size={13} color="#666" />
              </HeadIcons>
            </PageHead>
            <PageRow $mt={1} $h={30}><Thumb $sel />Seite 1</PageRow>
            <PageRow $mt={4} $h={22}><Thumb />Seite 2</PageRow>
          </PagesBody>
          <Divider />
          <PanelHead $h={21}>
            <Tab $on $h={19}>Ebenen</Tab>
            <HeadMenu><MenuLines /></HeadMenu>
          </PanelHead>
          <LayerTools>
            <Label $w={54} $mr={1} $size={12.3}>Deckkraft:</Label>
            <Field $w={49} $h={19} $dim>100 %<Down c="#888" /></Field>
            <Selector $w={128} $h={19} $ml={3} $dim>Normal<UpDown c="#888" /></Selector>
            <Pad $ml={3}><FaCog size={15} color="#bbb" /></Pad>
            <Pad $ml={7}><FaLock size={13} color="#888" /></Pad>
          </LayerTools>
          <LayerRow>
            <LayerMark /><LayerThumb /><LayerName>(Master A)</LayerName>
            <CheckBox $lit><Check /></CheckBox>
          </LayerRow>
          <LayerFill />
          <BottomBar>
            <StackBtn>
              <svg width="17" height="14" viewBox="0 0 17 14"><path d="M1 3l7.500-3L16 3 8.500 6zM1 6.500l7.500 3 7.500-3M1 10l7.500 3 7.500-3" fill="none" stroke="#ccc" strokeWidth="1.5" /></svg>
            </StackBtn>
            <Pad $ml={75}>
              <svg width="14" height="12" viewBox="0 0 14 12"><rect width="14" height="12" fill="#bdbdbd" /><circle cx="7" cy="6" r="3.500" fill="#444" /></svg>
            </Pad>
            <Pad $ml={10}>
              <svg width="13" height="13" viewBox="0 0 13 13"><circle cx="6.500" cy="6.500" r="6" fill="#555" stroke="#bbb" /><path d="M9 2a6 6 0 0 1-3 10z" fill="#ddd" /></svg>
            </Pad>
            <Pad $ml={8}>fx</Pad>
            <Pad $ml={83}>
              <svg width="11" height="13" viewBox="0 0 11 13"><path d="M1 .5h6l3.500 3.500v8.500H1zM7 .5V4h3.500" fill="none" stroke="#ccc" /></svg>
            </Pad>
            <Pad $ml={10}><FaTrashAlt size={12} color="#bbb" /></Pad>
          </BottomBar>
        </RightPanel>
      </Main>

      <StatusBar>
        <svg width="10" height="10" viewBox="0 0 10 10"><path d="M.5 0v10M10 0v10L2 5z" fill="#777" stroke="#777" strokeWidth=".6" /></svg>
        <svg width="8" height="10" viewBox="0 0 8 10" style={{ marginLeft: 9 }}><path d="M8 0v10L0 5z" fill="#777" /></svg>
        <PageCount>1 von 2</PageCount>
        <svg width="8" height="10" viewBox="0 0 8 10"><path d="M0 0v10l8-5z" fill="#eee" /></svg>
        <svg width="10" height="10" viewBox="0 0 10 10" style={{ marginLeft: 9 }}><path d="M0 0v10l8-5zM9.500 0v10" fill="#eee" stroke="#eee" strokeWidth=".6" /></svg>
        <svg width="11" height="13" viewBox="0 0 11 13" style={{ marginLeft: 9 }}><path d="M.5.500h10v12H.5zM3 3h5M3 5.500h5M3 8h5M3 10.500h5" fill="none" stroke="#ddd" /></svg>
        <Hint><b>Ziehen</b> = Per Auswahlrahmen markieren. <b>Klick</b> auf Objekt = Objekt auswählen.</Hint>
      </StatusBar>
    </Shell>
  );
}
